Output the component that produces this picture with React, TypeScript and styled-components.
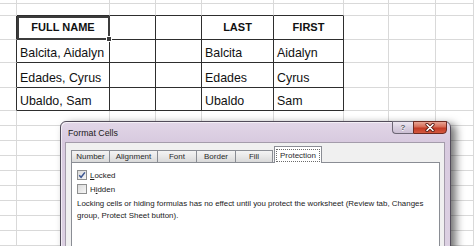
import { FC } from "react";
import styled, { createGlobalStyle } from "styled-components";

const COLS = [17, 93, 46, 46, 72, 70, 45, 47, 38];
const ROWS = [3, 13, 24, 23, 25, 23, 15, 15, 15, 15, 15, 15, 15, 15, 15];

const TABLE_TOP = 2;
const TABLE_BOTTOM = 5;
const TABLE_LEFT = 1;
const TABLE_RIGHT = 5;

const HEADER = ["FULL NAME", "", "", "LAST", "FIRST"];
const DATA = [
	["Balcita, Aidalyn", "", "", "Balcita", "Aidalyn"],
	["Edades, Cyrus", "", "", "Edades", "Cyrus"],
	["Ubaldo, Sam", "", "", "Ubaldo", "Sam"],
];

const TABS = [
	{ label: "Number", w: 39 },
	{ label: "Alignment", w: 49 },
	{ label: "Font", w: 40 },
	{ label: "Border", w: 40 },
	{ label: "Fill", w: 38 },
	{ label: "Protection", w: 48, active: true },
];

const GlobalStyle = createGlobalStyle`
	html, body {
		margin: 0;
		padding: 0;
		background: #ffffff;
	}
	body {
		width: 474px;
		height: 246px;
		overflow: hidden;
	}
`;

const cellText = (row: number, col: number): string => {
	if (col < TABLE_LEFT || col > TABLE_RIGHT) return "";
	if (row === TABLE_TOP) return HEADER[col - TABLE_LEFT];
	if (row > TABLE_TOP && row <= TABLE_BOTTOM) return DATA[row - TABLE_TOP - 1][col - TABLE_LEFT];
	return "";
};

const App: FC = () => {
	return (
		<Page>
			<GlobalStyle />
			<Sheet>
				{ROWS.map((_, r) =>
					COLS.map((__, c) => {
						const inRows = r >= TABLE_TOP && r <= TABLE_BOTTOM;
						const inCols = c >= TABLE_LEFT && c <= TABLE_RIGHT;
						const rightDark = inRows && c >= TABLE_LEFT - 1 && c <= TABLE_RIGHT;
						const bottomDark = inCols && r >= TABLE_TOP - 1 && r <= TABLE_BOTTOM;
						return (
							<Cell
								key={`${r}-${c}`}
								$rightDark={rightDark}
								$bottomDark={bottomDark}
								$header={r === TABLE_TOP}
								$active={r === TABLE_TOP && c === TABLE_LEFT}
							>
								{cellText(r, c)}
							</Cell>
						);
					})
				)}
			</Sheet>

			<Dialog>
				<TitleBar>
					<Title>Format Cells</Title>
					<Controls>
						<HelpButton>?</HelpButton>
						<CloseButton>
							<svg width="12" height="9" viewBox="0 0 12 9">
								<path d="M3 1.5 L9 7.5 M9 1.5 L3 7.5" stroke="#5b1a12" strokeWidth="3.2" strokeLinecap="round" />
								<path d="M3 1.5 L9 7.5 M9 1.5 L3 7.5" stroke="#ffffff" strokeWidth="1.6" strokeLinecap="round" />
							</svg>
						</CloseButton>
					</Controls>
				</TitleBar>
				<Client>
					<TabRow>
						{TABS.map((t) => (
							<Tab key={t.label} $w={t.w} $active={!!t.active}>
								{t.active ? <Focus>{t.label}</Focus> : t.label}
							</Tab>
						))}
					</TabRow>
					<Panel>
						<CheckRow>
							<Box>
								<svg width="8" height="8" viewBox="0 0 8 8">
									<path d="M1.2 4.2 L3.1 6.3 L6.9 1.4" fill="none" stroke="#3b5590" strokeWidth="1.5" />
								</svg>
							</Box>
							<span>
								<u>L</u>ocked
							</span>
						</CheckRow>
						<CheckRow>
							<Box />
							<span>
								H<u>i</u>dden
							</span>
						</CheckRow>
						<Note>
							Locking cells or hiding formulas has no effect until you protect the worksheet (Review tab, Changes
							group, Protect Sheet button).
						</Note>
					</Panel>
				</Client>
			</Dialog>
		</Page>
	);
};

const Page = styled.div`
	position: relative;
	width: 474px;
	height: 246px;
	overflow: hidden;
	background: #ffffff;
`;

const Sheet = styled.div`
	display: grid;
	grid-template-columns: ${COLS.map((w) => `${w}px`).join(" ")};
	grid-template-rows: ${ROWS.map((h) => `${h}px`).join(" ")};
	font-family: "Liberation Sans", Arial, sans-serif;
	color: #111111;
`;

const Cell = styled.div<{ $rightDark: boolean; $bottomDark: boolean; $header: boolean; $active: boolean }>`
	position: relative;
	box-sizing: border-box;
	display: flex;
	align-items: ${(p) => (p.$header ? "center" : "flex-end")};
	justify-content: ${(p) => (p.$header ? "center" : "flex-start")};
	padding: ${(p) => (p.$header ? "0 0 1px" : "0 0 3px 3px")};
	border-right: 1px solid ${(p) => (p.$rightDark ? "#2e2e2e" : "#d9d9d9")};
	border-bottom: 1px solid ${(p) => (p.$bottomDark ? "#2e2e2e" : "#d9d9d9")};
	font-size: ${(p) => (p.$header ? "11px" : "12.4px")};
	font-weight: ${(p) => (p.$header ? 700 : 400)};
	line-height: 1;
	white-space: nowrap;

	${(p) =>
		p.$active &&
		`
		outline: 2px solid #3c3c3c;
		outline-offset: -2px;
		z-index: 1;
		&::after {
			content: "";
			position: absolute;
			right: -3px;
			bottom: -3px;
			width: 4px;
			height: 4px;
			background: #3c3c3c;
			border: 1px solid #ffffff;
		}
	`}
`;

const Dialog = styled.div`
	position: absolute;
	left: 60px;
	top: 121px;
	width: 391px;
	height: 150px;
	box-sizing: border-box;
	display: flex;
	flex-direction: column;
	padding: 0 5px 0 4px;
	border: 1px solid #524c5a;
	border-radius: 6px 6px 0 0;
	background: linear-gradient(#e2d6e7, #d8cadf 20px, #ddd2e3);
	box-shadow: 5px 3px 8px rgba(0, 0, 0, 0.55), inset 1px 1px 0 rgba(255, 255, 255, 0.6);
	font-family: "Liberation Sans", Arial, sans-serif;
	color: #1e1e1e;
`;

const TitleBar = styled.div`
	display: flex;
	align-items: center;
	height: 20px;
	flex-shrink: 0;
`;

const Title = styled.div`
	padding-left: 3px;
	padding-top: 1px;
	font-size: 8.8px;
	color: #202020;
`;

const Controls = styled.div`
	display: flex;
	align-self: flex-start;
	margin: -1px -2px 0 auto;
`;

const HelpButton = styled.div`
	box-sizing: border-box;
	width: 21px;
	height: 13px;
	display: flex;
	align-items: center;
	justify-content: center;
	border: 1px solid #6d6775;
	border-right: none;
	border-radius: 0 0 0 4px;
	background: linear-gradient(#eee7f1, #d9cfe0 50%, #cbbfd3);
	font-size: 8px;
	font-weight: 700;
	color: #58545f;
	text-shadow: 0 1px 0 #ffffff;
`;

const CloseButton = styled.div`
	box-sizing: border-box;
	width: 34px;
	height: 13px;
	display: flex;
	align-items: center;
	justify-content: center;
	border: 1px solid #6e2a21;
	border-radius: 0 0 4px 0;
	background: linear-gradient(#e8a595, #d66a55 45%, #c23a25 55%, #d4583f);
`;

const Client = styled.div`
	flex: 1;
	display: flex;
	flex-direction: column;
	border: 1px solid #a49cab;
	border-bottom: none;
	background: #f0f0f0;
	padding-top: 3px;
`;

const TabRow = styled.div`
	display: flex;
	align-items: flex-end;
	height: 17px;
	padding-left: 5px;
	position: relative;
	z-index: 1;
	margin-bottom: -1px;
`;

const Tab = styled.div<{ $w: number; $active: boolean }>`
	box-sizing: border-box;
	width: ${(p) => p.$w}px;
	height: ${(p) => (p.$active ? 17 : 13)}px;
	margin-left: ${(p) => (p.$active ? "1px" : "-1px")};
	display: flex;
	align-items: center;
	justify-content: center;
	border: 1px solid #8a8d94;
	border-bottom: ${(p) => (p.$active ? "none" : "1px solid #8a8d94")};
	background: ${(p) => (p.$active ? "#ffffff" : "linear-gradient(#f4f4f4, #e8e8e8 50%, #d9d9d9)")};
	font-size: 8px;
	color: #2a2a2a;
	padding: ${(p) => (p.$active ? "1px 1px 0" : "0")};

	&:first-child {
		margin-left: 0;
	}
`;

const Focus = styled.span`
	box-sizing: border-box;
	width: 100%;
	height: 13px;
	display: flex;
	align-items: center;
	justify-content: center;
	border: 1px dotted #6a6a6a;
`;

const Panel = styled.div`
	flex: 1;
	margin: 0 4px 0 5px;
	padding: 7px 5px;
	border: 1px solid #8a8d94;
	background: #ffffff;
	font-size: 7.9px;
	color: #1a1a1a;
`;

const CheckRow = styled.div`
	display: flex;
	align-items: center;
	gap: 3px;
	height: 10px;
	margin-bottom: 4px;
`;

const Box = styled.div`
	box-sizing: border-box;
	width: 10px;
	height: 10px;
	display: flex;
	align-items: center;
	justify-content: center;
	border: 1px solid #8e8f8f;
	background: linear-gradient(135deg, #dadada, #f6f6f6);
`;

const Note = styled.p`
	margin: 3px 0 0;
	line-height: 11.5px;
	width: 360px;
`;

export default App;
